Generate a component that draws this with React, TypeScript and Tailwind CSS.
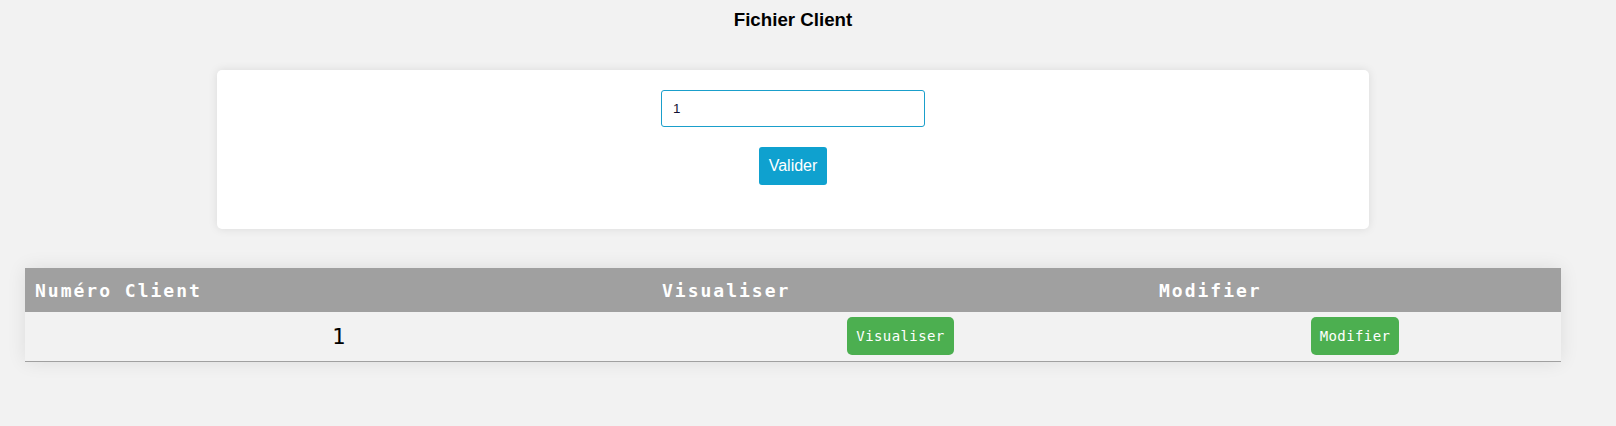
import { useState } from "react";

const clients = [{ id: 1 }];

function ActionButton({ label }: { label: string }) {
  return (
    <button className="h-[38px] rounded-[5px] bg-[#4caf50] px-[9px] font-['DejaVu_Sans_Mono',monospace] text-[14px] tracking-[0.4px] text-white">
      {label}
    </button>
  );
}

export default function App() {
  const [numero, setNumero] = useState("1");

  return (
    <main className="min-h-[426px] bg-[#f2f2f2] font-['Liberation_Sans',Arial,sans-serif]">
      <div className="w-[1586px]">
        {/* Title */}
        <h3 className="pt-[9px] text-center text-[18.72px] leading-[22px] font-bold text-black">
          Fichier Client
        </h3>

        {/* Search card */}
        <section className="mx-auto mt-[39px] flex h-[159px] w-[1152px] flex-col items-center rounded-[5px] bg-white pt-[20px] shadow-[0_0_10px_rgba(0,0,0,0.1)]">
          <input
            autoFocus
            value={numero}
            onChange={(e) => setNumero(e.target.value)}
            className="h-[37px] w-[264px] rounded-[3px] border border-[#1a9fcb] bg-white px-[11px] font-['Liberation_Sans',Arial,sans-serif] text-[13.33px] text-[#111133] caret-black outline-none"
          />
          <button className="mt-[20px] h-[38px] rounded-[3px] bg-[#0fa1cf] px-[10px] text-[16px] text-white">
            Valider
          </button>
        </section>

        {/* Results table */}
        <div className="mx-auto mt-[39px] w-[1536px] shadow-[0_0_18px_rgba(0,0,0,0.09)]">
          <table className="w-full border-collapse font-['DejaVu_Sans_Mono',monospace]">
            <colgroup>
              <col className="w-[627px]" />
              <col className="w-[497px]" />
              <col className="w-[412px]" />
            </colgroup>
            <thead>
              <tr className="h-[44px] bg-[#a0a0a0] text-left text-[18px] font-bold tracking-[2px] text-white">
                <th className="px-[10px] font-bold">Numéro Client</th>
                <th className="px-[10px] font-bold">Visualiser</th>
                <th className="px-[10px] font-bold">Modifier</th>
              </tr>
            </thead>
            <tbody>
              {clients.map((c) => (
                <tr key={c.id} className="h-[49px] border-b border-[#a0a0a0] bg-[#f2f2f2]">
                  <td className="text-center text-[22px] text-black">{c.id}</td>
                  <td className="text-center">
                    <ActionButton label="Visualiser" />
                  </td>
                  <td className="text-center">
                    <ActionButton label="Modifier" />
                  </td>
                </tr>
              ))}
            </tbody>
          </table>
        </div>
      </div>
    </main>
  );
}
